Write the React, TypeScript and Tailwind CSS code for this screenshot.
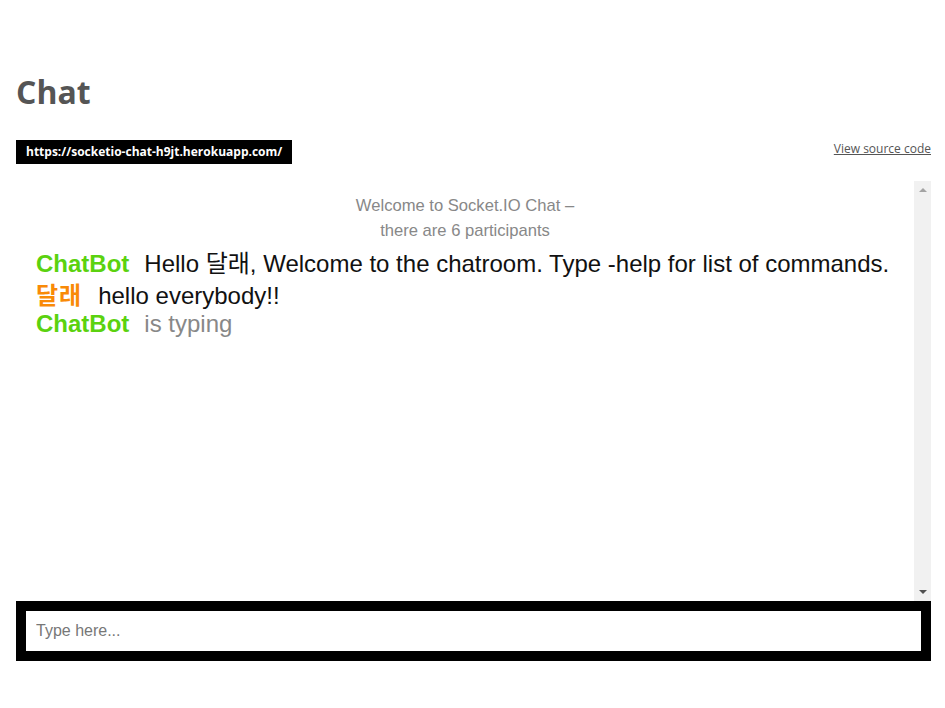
import React from "react";

const sans = { fontFamily: '"Open Sans", sans-serif' };

export default function App() {
  return (
    <div className="w-[945px] h-[708px] bg-white pl-4 pr-[14px] overflow-hidden" style={sans}>
      <h1 className="pt-[69px] text-[32px] leading-[45px] font-bold text-[#555]">Chat</h1>
      <div className="mt-[26px] flex items-center justify-between">
        <div className="h-6 bg-black px-[10px] flex items-center text-[12px] font-bold text-white">
          https://socketio-chat-h9jt.herokuapp.com/
        </div>
        <a className="text-[12px] text-[#555] underline -mt-[6px]" href="#">View source code</a>
      </div>
      <div className="mt-[17px] h-[420px] flex">
        <div
          className="flex-1 pt-3 px-5"
          style={{ fontFamily: '"Liberation Sans", Arial, "Noto Sans CJK KR", sans-serif' }}
        >
          <div className="text-center text-[16.6px] leading-[25px] text-[#888]">
            <div>Welcome to Socket.IO Chat –</div>
            <div>there are 6 participants</div>
          </div>
          <ul className="mt-[7px] text-[24px] text-[#111]">
            <li className="leading-[28px] h-[28px]">
              <span className="font-bold text-[#5bd20f] pr-[15px]">ChatBot</span>
              <span>Hello 달래, Welcome to the chatroom. Type -help for list of commands.</span>
            </li>
            <li className="leading-[36px] h-[36px]">
              <span className="font-bold text-[#f98a07] pr-[16px] tracking-[1px]">달래</span>
              <span>hello everybody!!</span>
            </li>
            <li className="leading-[20px] h-[20px]">
              <span className="font-bold text-[#5bd20f] pr-[15px]">ChatBot</span>
              <span className="text-[#888]">is typing</span>
            </li>
          </ul>
        </div>
        <div className="w-[17px] bg-[#f1f1f1] flex flex-col justify-between items-center py-[7px]">
          <div className="w-0 h-0 border-l-[4px] border-r-[4px] border-b-[4px] border-l-transparent border-r-transparent border-b-[#a3a3a3]" />
          <div className="w-0 h-0 border-l-[4px] border-r-[4px] border-t-[4px] border-l-transparent border-r-transparent border-t-[#505050]" />
        </div>
      </div>
      <div className="h-[60px] bg-black p-[10px]">
        <input
          className="w-full h-full bg-white px-[10px] text-[16px] outline-none placeholder:text-[#777]"
          style={{ fontFamily: '"Liberation Sans", Arial, sans-serif' }}
          placeholder="Type here..."
        />
      </div>
    </div>
  );
}
